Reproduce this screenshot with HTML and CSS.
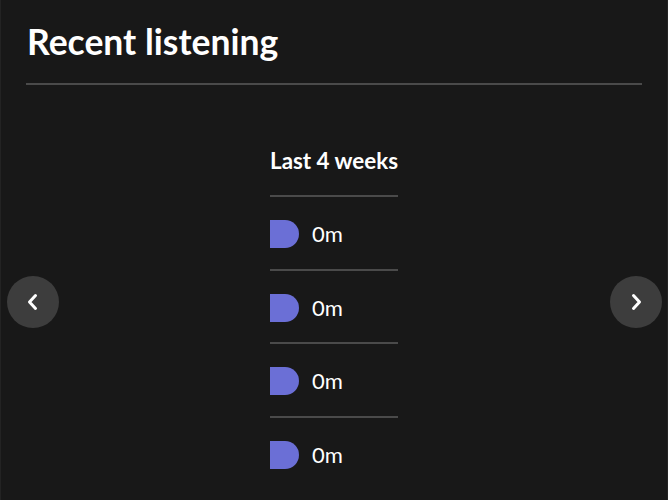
FILE: index.html
```html
<!DOCTYPE html>
<html>
<head>
<meta charset="utf-8">
<link rel="stylesheet" href="styles.css">
</head>
<body>
<div class="page">
  <header class="header">
    <h1 class="title">Recent listening</h1>
  </header>
  <section class="carousel">
    <button class="nav nav-prev" aria-label="Previous">
      <svg width="16" height="18" viewBox="0 0 16 18"><path d="M10.5 2.5 L4.5 9 L10.5 15.5" fill="none" stroke="#fff" stroke-width="3" stroke-linecap="round" stroke-linejoin="round"/></svg>
    </button>
    <div class="column">
      <div class="col-title">Last 4 weeks</div>
      <div class="row"><span class="chip"></span><span class="val">0m</span></div>
      <div class="row"><span class="chip"></span><span class="val">0m</span></div>
      <div class="row"><span class="chip"></span><span class="val">0m</span></div>
      <div class="row"><span class="chip"></span><span class="val">0m</span></div>
    </div>
    <button class="nav nav-next" aria-label="Next">
      <svg width="16" height="18" viewBox="0 0 16 18"><path d="M5.5 2.5 L11.5 9 L5.5 15.5" fill="none" stroke="#fff" stroke-width="3" stroke-linecap="round" stroke-linejoin="round"/></svg>
    </button>
  </section>
</div>
</body>
</html>
```
FILE: styles.css
```css
html, body {
  margin: 0;
  padding: 0;
  background: #181818;
}
body {
  font-family: Lato, "Noto Sans", sans-serif;
  color: #ffffff;
  height: 500px;
  overflow: hidden;
}
.page {
  height: 500px;
  border-left: 1px solid #232323;
  border-right: 1px solid #232323;
  box-sizing: border-box;
}
.header {
  margin: 0 25px 0 25px;
  padding-top: 22px;
  padding-bottom: 21px;
  border-bottom: 2px solid #4a4a4a;
}
.title {
  margin: 0;
  font-size: 35.5px;
  font-weight: 700;
  line-height: 40px;
  padding-left: 1px;
}
.carousel {
  position: relative;
  display: flex;
  justify-content: center;
  padding-top: 61px;
}
.column {
  width: 128px;
  display: flex;
  flex-direction: column;
}
.col-title {
  font-size: 22.4px;
  font-weight: 700;
  line-height: 30px;
  padding-bottom: 19px;
  white-space: nowrap;
}
.row {
  display: flex;
  align-items: center;
  gap: 13px;
  border-top: 2px solid #4a4a4a;
  padding-top: 3px;
  box-sizing: border-box;
  height: 73.5px;
}
.chip {
  width: 29px;
  height: 28px;
  background: #6b6fd6;
  border-radius: 0 14px 14px 0;
}
.val {
  font-size: 22px;
  line-height: 24px;
}
.nav {
  position: absolute;
  top: 191px;
  width: 52px;
  height: 52px;
  border-radius: 50%;
  border: none;
  padding: 0;
  background: #3d3d3d;
  display: flex;
  align-items: center;
  justify-content: center;
  cursor: pointer;
}
.nav-prev { left: 6px; }
.nav-next { right: 5px; }
```
